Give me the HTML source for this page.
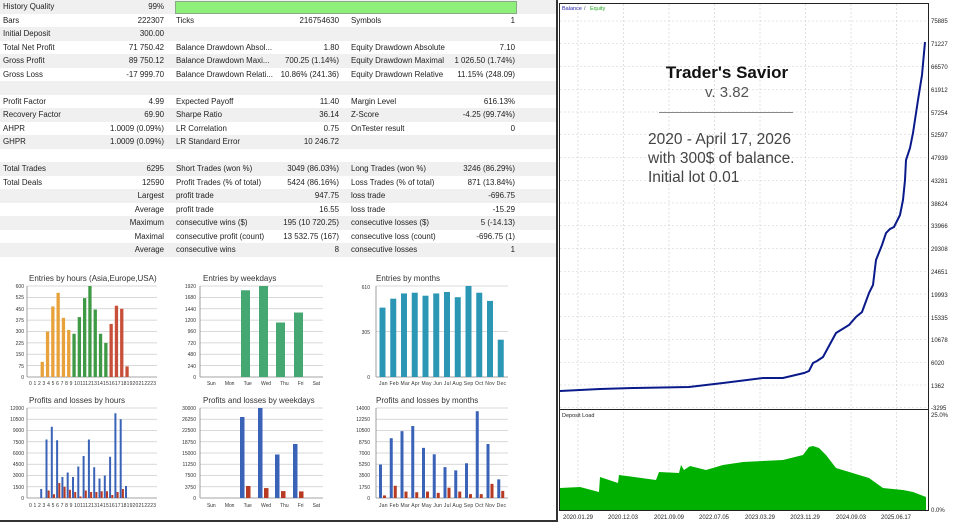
<!DOCTYPE html>
<html><head><meta charset="utf-8"><style>
body{margin:0;width:960px;height:522px;overflow:hidden;background:#fff;font-family:"Liberation Sans",sans-serif;position:relative}
.t{position:absolute;left:0;top:0;width:556px}
.r{height:13.5px;position:relative;font-size:7.9px;line-height:13.5px;color:#222}
.r:nth-child(odd){background:#f0f0f0}
.r span{position:absolute;white-space:nowrap}
.a{left:3px}.b{right:392px}.c{left:176px}.d{right:217px}.e{left:351px}.f{right:41px}
svg{position:absolute;left:0;top:0}
</style></head><body>
<div class="t">
<div class="r"><span class="a">History Quality</span><span class="b">99%</span><div style="position:absolute;left:175px;top:1px;width:340px;height:11px;background:#8ef07a;border:1px solid #8a8"></div></div>
<div class="r"><span class="a">Bars</span><span class="b">222307</span><span class="c">Ticks</span><span class="d">216754630</span><span class="e">Symbols</span><span class="f">1</span></div>
<div class="r"><span class="a">Initial Deposit</span><span class="b">300.00</span></div>
<div class="r"><span class="a">Total Net Profit</span><span class="b">71 750.42</span><span class="c">Balance Drawdown Absol...</span><span class="d">1.80</span><span class="e">Equity Drawdown Absolute</span><span class="f">7.10</span></div>
<div class="r"><span class="a">Gross Profit</span><span class="b">89 750.12</span><span class="c">Balance Drawdown Maxi...</span><span class="d">700.25 (1.14%)</span><span class="e">Equity Drawdown Maximal</span><span class="f">1 026.50 (1.74%)</span></div>
<div class="r"><span class="a">Gross Loss</span><span class="b">-17 999.70</span><span class="c">Balance Drawdown Relati...</span><span class="d">10.86% (241.36)</span><span class="e">Equity Drawdown Relative</span><span class="f">11.15% (248.09)</span></div>
<div class="r"></div>
<div class="r"><span class="a">Profit Factor</span><span class="b">4.99</span><span class="c">Expected Payoff</span><span class="d">11.40</span><span class="e">Margin Level</span><span class="f">616.13%</span></div>
<div class="r"><span class="a">Recovery Factor</span><span class="b">69.90</span><span class="c">Sharpe Ratio</span><span class="d">36.14</span><span class="e">Z-Score</span><span class="f">-4.25 (99.74%)</span></div>
<div class="r"><span class="a">AHPR</span><span class="b">1.0009 (0.09%)</span><span class="c">LR Correlation</span><span class="d">0.75</span><span class="e">OnTester result</span><span class="f">0</span></div>
<div class="r"><span class="a">GHPR</span><span class="b">1.0009 (0.09%)</span><span class="c">LR Standard Error</span><span class="d">10 246.72</span></div>
<div class="r"></div>
<div class="r"><span class="a">Total Trades</span><span class="b">6295</span><span class="c">Short Trades (won %)</span><span class="d">3049 (86.03%)</span><span class="e">Long Trades (won %)</span><span class="f">3246 (86.29%)</span></div>
<div class="r"><span class="a">Total Deals</span><span class="b">12590</span><span class="c">Profit Trades (% of total)</span><span class="d">5424 (86.16%)</span><span class="e">Loss Trades (% of total)</span><span class="f">871 (13.84%)</span></div>
<div class="r"><span class="b">Largest</span><span class="c">profit trade</span><span class="d">947.75</span><span class="e">loss trade</span><span class="f">-696.75</span></div>
<div class="r"><span class="b">Average</span><span class="c">profit trade</span><span class="d">16.55</span><span class="e">loss trade</span><span class="f">-15.29</span></div>
<div class="r"><span class="b">Maximum</span><span class="c">consecutive wins ($)</span><span class="d">195 (10 720.25)</span><span class="e">consecutive losses ($)</span><span class="f">5 (-14.13)</span></div>
<div class="r"><span class="b">Maximal</span><span class="c">consecutive profit (count)</span><span class="d">13 532.75 (167)</span><span class="e">consecutive loss (count)</span><span class="f">-696.75 (1)</span></div>
<div class="r"><span class="b">Average</span><span class="c">consecutive wins</span><span class="d">8</span><span class="e">consecutive losses</span><span class="f">1</span></div>
<div class="r" style="height:12px"></div>
</div>
<div style="position:absolute;left:0;top:520px;width:558px;height:2px;background:#333"></div>
<div style="position:absolute;left:556px;top:0;width:2px;height:522px;background:#333"></div>

<svg width="960" height="522" id="s" font-family="Liberation Sans, sans-serif">
<g id="bars"></g>
<g font-size="8" fill="#333">
<text x="29" y="281">Entries by hours (Asia,Europe,USA)</text>
<text x="203" y="281">Entries by weekdays</text>
<text x="376" y="281">Entries by months</text>
<text x="29" y="403">Profits and losses by hours</text>
<text x="203" y="403">Profits and losses by weekdays</text>
<text x="376" y="403">Profits and losses by months</text>
</g>
<g font-size="5" fill="#333" text-anchor="end">
<text x="24" y="288">600</text><text x="24" y="299">525</text><text x="24" y="311">450</text><text x="24" y="322">375</text><text x="24" y="333">300</text><text x="24" y="345">225</text><text x="24" y="356">150</text><text x="24" y="368">75</text><text x="24" y="379">0</text>
<text x="196" y="288">1920</text><text x="196" y="299">1680</text><text x="196" y="311">1440</text><text x="196" y="322">1200</text><text x="196" y="333">960</text><text x="196" y="345">720</text><text x="196" y="356">480</text><text x="196" y="368">240</text><text x="196" y="379">0</text>
<text x="370" y="289">610</text><text x="370" y="334">305</text><text x="370" y="379">0</text>
<text x="24" y="410">12000</text><text x="24" y="421">10500</text><text x="24" y="432">9000</text><text x="24" y="444">7500</text><text x="24" y="455">6000</text><text x="24" y="466">4500</text><text x="24" y="477">3000</text><text x="24" y="489">1500</text><text x="24" y="500">0</text>
<text x="196" y="410">30000</text><text x="196" y="421">26250</text><text x="196" y="432">22500</text><text x="196" y="444">18750</text><text x="196" y="455">15000</text><text x="196" y="466">11250</text><text x="196" y="477">7500</text><text x="196" y="489">3750</text><text x="196" y="500">0</text>
<text x="370" y="410">14000</text><text x="370" y="421">12250</text><text x="370" y="432">10500</text><text x="370" y="444">8750</text><text x="370" y="455">7000</text><text x="370" y="466">5250</text><text x="370" y="477">3500</text><text x="370" y="489">1750</text><text x="370" y="500">0</text>
</g>
<g font-size="5" fill="#333">
<text x="29" y="385" textLength="127">0 1 2 3 4 5 6 7 8 9 1011121314151617181920212223</text>
<text x="29" y="507" textLength="127">0 1 2 3 4 5 6 7 8 9 1011121314151617181920212223</text>
<text x="207" y="385" textLength="113" word-spacing="8">Sun Mon Tue Wed Thu Fri Sat</text>
<text x="207" y="507" textLength="113" word-spacing="8">Sun Mon Tue Wed Thu Fri Sat</text>
<text x="379" y="385" textLength="127">Jan Feb Mar Apr May Jun Jul Aug Sep Oct Nov Dec</text>
<text x="379" y="507" textLength="127">Jan Feb Mar Apr May Jun Jul Aug Sep Oct Nov Dec</text>
</g>

<g id="grid"></g>
<rect x="559.5" y="3.5" width="369" height="406" fill="none" stroke="#222"/>
<rect x="559.5" y="409.5" width="369" height="101" fill="none" stroke="#222"/>
<polygon fill="#00b000" points="560,510 560,488 580,487 599,492 600,477 618,483 619,475 656,480 659,472 679,473 681,465 684,470 690,466 706,470 723,465 743,462 783,460 803,455 809,447 813,446 819,448 826,455 836,468 869,478 883,488 903,490 913,492 926,497 926,510"/>
<polyline fill="none" stroke="#0a1a8a" stroke-width="2" points="560,391 600,389 633,388 689,387 723,383 763,378 783,378 804,373 809,371 813,363 817,361 823,357 836,333 849,325 856,317 862,312 869,293 873,285 876,260 882,245 886,233 890,229 894,227 900,215 903,200 905,180 906,160 910,148 913,133 918,100 922,75 925,42"/>
<g font-size="5.5" fill="#222">
<text x="562" y="10" fill="#2222aa">Balance</text><text x="584" y="10" fill="#444">/</text><text x="590" y="10" fill="#2a2">Equity</text>
<text x="562" y="417">Deposit Load</text>
</g>
<g font-size="6" fill="#222">
<text x="931" y="23">75885</text><text x="931" y="46">71227</text><text x="931" y="69">66570</text><text x="931" y="92">61912</text><text x="931" y="115">57254</text><text x="931" y="137">52597</text><text x="931" y="160">47939</text><text x="931" y="183">43281</text><text x="931" y="206">38624</text><text x="931" y="228">33966</text><text x="931" y="251">29308</text><text x="931" y="274">24651</text><text x="931" y="297">19993</text><text x="931" y="320">15335</text><text x="931" y="342">10678</text><text x="931" y="365">6020</text><text x="931" y="388">1362</text><text x="931" y="410">-3295</text>
<text x="931" y="417">25.0%</text><text x="931" y="512">0.0%</text>
<g text-anchor="middle"><text x="578" y="519">2020.01.29</text><text x="623" y="519">2020.12.03</text><text x="669" y="519">2021.09.09</text><text x="714" y="519">2022.07.05</text><text x="760" y="519">2023.03.29</text><text x="805" y="519">2023.11.29</text><text x="851" y="519">2024.09.03</text><text x="896" y="519">2025.06.17</text></g>
</g>
<text x="727" y="78" font-size="17" font-weight="bold" text-anchor="middle" fill="#111">Trader's Savior</text>
<text x="727" y="97" font-size="15" text-anchor="middle" fill="#555">v. 3.82</text>
<line x1="659" y1="112.5" x2="793" y2="112.5" stroke="#888"/>
<g font-size="15.5" fill="#444"><text x="648" y="144">2020 - April 17, 2026</text><text x="648" y="163">with 300$ of balance.</text><text x="648" y="182">Initial lot 0.01</text></g>
</svg>
<script>
var N='http://www.w3.org/2000/svg',B=document.getElementById('bars'),G=document.getElementById('grid');
function r(p,a){var e=document.createElementNS(N,p);for(var k in a)e.setAttribute(k,a[k]);return e}
function grid(x0,x1,y0,y1,n){for(var i=0;i<=n;i++){var y=y0+(y1-y0)*i/n;B.appendChild(r('line',{x1:x0,x2:x1,y1:y,y2:y,stroke:i==n?'#888':'#ccc','stroke-width':0.8}))}B.appendChild(r('line',{x1:x0,x2:x0,y1:y0,y2:y1,stroke:'#888','stroke-width':0.8}))}
grid(27,157,286,377,8);grid(200,323,286,377,8);grid(376,508,286,377,2);
grid(27,157,408,498,8);grid(200,323,408,498,8);grid(376,508,408,498,8);
function bar(x,y0,h,w,c){B.appendChild(r('rect',{x:x,y:y0-h,width:w,height:h,fill:c}))}
var hv={2:100,3:300,4:465,5:555,6:390,7:310,8:285,9:395,10:520,11:600,12:445,13:285,14:225,15:350,16:470,17:450,18:70};
for(var i in hv){var c=i<8?'#e8a23c':i<15?'#3f9a45':'#c8503a';bar(29+i*5.3+1,377,hv[i]/600*91,3.3,c)}
[[241,1830],[259,1920],[276,1150],[294,1360]].forEach(function(a){bar(a[0],377,a[1]/1920*91,9,'#45a872')});
[465,525,560,565,545,560,570,535,610,565,510,250].forEach(function(v,i){bar(379.5+i*10.75,377,v/610*91,6,'#2c97b5')});
var pb={2:1200,3:7800,4:9500,5:7700,6:2800,7:3400,8:2800,9:4200,10:5600,11:7800,12:4100,13:2600,14:3000,15:5500,16:11300,17:10500,18:1600};
var pr={3:1000,4:500,5:2000,6:1500,7:1100,8:800,9:200,10:1000,11:800,12:800,13:900,14:900,15:400,16:800,17:1200};
for(var i in pb){bar(29+i*5.3+0.6,498,pb[i]/12000*90,2,'#3a63b8');if(pr[i])bar(29+i*5.3+2.8,498,pr[i]/12000*90,2,'#b83a22')}
[[241,27000,4000],[259,30000,3300],[276,14500,2300],[294,18000,2200]].forEach(function(a){bar(a[0]-1,498,a[1]/30000*90,4.5,'#3a63b8');bar(a[0]+5,498,a[2]/30000*90,4.5,'#b83a22')});
var mb=[5200,9300,10400,11200,7800,6800,4800,4300,5400,13500,8400,2900],mr=[400,1900,1000,900,1000,800,1600,1000,600,600,2200,1100];
mb.forEach(function(v,i){bar(379+i*10.75,498,v/14000*90,3,'#3a63b8');bar(383+i*10.75,498,mr[i]/14000*90,3,'#b83a22')});
for(var x=578;x<928;x+=45.5)G.appendChild(r('line',{x1:x,x2:x,y1:4,y2:510,stroke:'#ccc','stroke-dasharray':'2,2','stroke-width':0.6}));
for(var y=21;y<409;y+=22.75)G.appendChild(r('line',{x1:560,x2:928,y1:y,y2:y,stroke:'#ccc','stroke-dasharray':'2,2','stroke-width':0.6}));
</script>
</body></html>
